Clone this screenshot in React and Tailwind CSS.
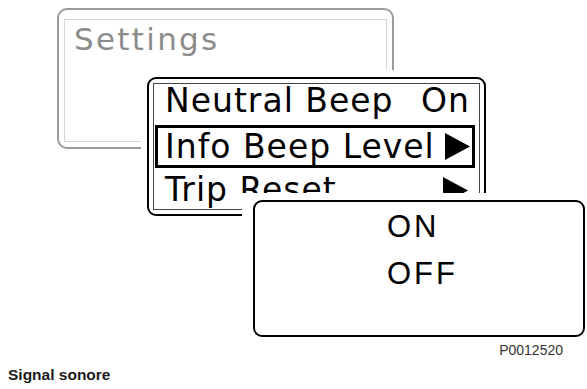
const Arrow = () => (
  <svg width="25" height="27" viewBox="0 0 25 27" className="shrink-0">
    <polygon points="0,0 25,13.5 0,27" fill="#000" />
  </svg>
);

const App = () => {
  return (
    <div className="w-[587px] h-[389px] bg-white overflow-hidden font-['Liberation_Sans',Arial,sans-serif]">
      {/* Diagram: three stacked screens */}
      <div className="relative h-[342px]">
        {/* Settings screen (greyed) */}
        <div className="absolute left-[57px] top-[8px] w-[337px] h-[141px] border-2 border-[#9b9b9b] rounded-[10px]">
          <div className="absolute left-[5px] top-[9px] right-[5px] bottom-[5px] border border-[#d6d6d6]" />
          <div className="relative pl-[15px] pt-[14px] text-[31px] leading-[31px] tracking-[2.3px] text-[#8c8c8c] font-['DejaVu_Sans',sans-serif]">
            Settings
          </div>
        </div>

        {/* Menu screen */}
        <div className="absolute left-[141px] top-[70px] bg-white pt-[7px] pl-[6px] pr-[6px] pb-[6px]">
          <div className="relative w-[339px] h-[139px] border-2 border-black rounded-[9px] overflow-hidden font-['DejaVu_Sans',sans-serif] text-[33px] tracking-[1px] text-black">
            <div className="absolute left-[4px] top-[4px] right-[4px] bottom-[4px] border border-[#444]" />
            <div className="relative pl-[6px] pr-[9px]">
              <div className="flex justify-between h-[44px] leading-[44px] pl-[10px] pr-[5px]">
                <span>Neutral Beep</span>
                <span>On</span>
              </div>
              <div className="mt-[2px] flex items-center justify-between h-[43px] border-[3px] border-black pl-[7px] pr-[2px] leading-[37px] bg-white">
                <span>Info Beep Level</span>
                <Arrow />
              </div>
              <div className="flex items-center justify-between h-[44px] leading-[44px] pl-[10px] pr-[7px]">
                <span>Trip Reset</span>
                <Arrow />
              </div>
            </div>
          </div>
        </div>

        {/* Option popup */}
        <div className="absolute left-[242px] top-[193px] bg-white pt-[7px] pl-[11px]">
          <div className="w-[332px] h-[137px] border-2 border-black rounded-[9px] bg-white pt-[1px] pl-[132px] text-[31px] leading-[47px] tracking-[3px] text-black">
            <div>ON</div>
            <div>OFF</div>
          </div>
        </div>
      </div>

      <div className="flex justify-end pr-[24px] h-[16px] text-[14px] leading-[16px] text-[#333]">
        P0012520
      </div>

      <div className="mt-[8px] pl-[8px] text-[15.5px] leading-[18px] font-bold text-[#1a1a1a]">
        Signal sonore
      </div>
    </div>
  );
};

export default App;
